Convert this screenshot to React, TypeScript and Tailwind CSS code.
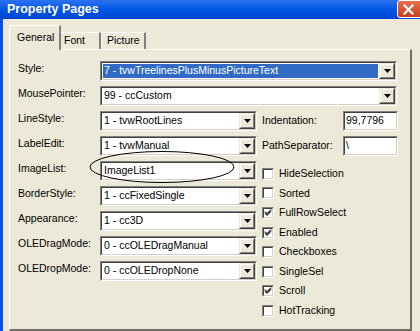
import type { ReactNode } from "react";

const Sunken = ({ className, children }: { className: string; children?: ReactNode }) => (
  <div className={"border border-t-[#808080] border-l-[#808080] border-b-white border-r-white " + className}>
    <div className="flex h-full items-center border border-t-[#404040] border-l-[#404040] border-b-[#d4d0c8] border-r-[#d4d0c8] bg-white">
      {children}
    </div>
  </div>
);

const DropButton = () => (
  <div className="h-[16px] w-[16px] shrink-0 border border-t-[#ece9d8] border-l-[#ece9d8] border-b-[#404040] border-r-[#404040]">
    <div className="flex h-full items-center justify-center border border-t-white border-l-white border-b-[#808080] border-r-[#808080] bg-[#ece9d8]">
      <svg width="7" height="4" viewBox="0 0 7 4">
        <polygon points="0,0 7,0 3.5,4" fill="#000" />
      </svg>
    </div>
  </div>
);

const Combo = ({ value, wide, selected }: { value: string; wide?: boolean; selected?: boolean }) => (
  <Sunken className={wide ? "h-[20px] w-[297px]" : "h-[20px] w-[157px]"}>
    <div className="h-full flex-1 p-[1px]">
      <div
        className={
          selected
            ? "flex h-full items-center bg-[#316ac5] pl-[1px] text-white"
            : "flex h-full items-center pl-[1px] text-black"
        }
      >
        {value}
      </div>
    </div>
    <DropButton />
  </Sunken>
);

const Row = ({ label, children }: { label: string; children: ReactNode }) => (
  <div className="flex h-[20px] items-start">
    <div className="w-[82px] leading-[14px]">{label}</div>
    {children}
  </div>
);

const Check = ({ label, checked }: { label: string; checked?: boolean }) => (
  <div className="flex h-[19.6px] items-center gap-[5px]">
    <div className="h-[12px] w-[12px] border border-t-[#808080] border-l-[#808080] border-b-white border-r-white">
      <div className="flex h-full items-center justify-center border border-t-[#404040] border-l-[#404040] border-b-[#d4d0c8] border-r-[#d4d0c8] bg-white">
        {checked && (
          <svg width="8" height="8" viewBox="0 0 8 8">
            <path d="M1 3.5 L3 5.5 L7 1.5 M1 4.5 L3 6.5 L7 2.5 M1 2.5 L3 4.5 L7 0.5" stroke="#000" strokeWidth="1" fill="none" />
          </svg>
        )}
      </div>
    </div>
    <span>{label}</span>
  </div>
);

export default function App() {
  const leftRows = [
    ["LineStyle:", "1 - tvwRootLines"],
    ["LabelEdit:", "1 - tvwManual"],
    ["ImageList:", "ImageList1"],
    ["BorderStyle:", "1 - ccFixedSingle"],
    ["Appearance:", "1 - cc3D"],
    ["OLEDragMode:", "0 - ccOLEDragManual"],
    ["OLEDropMode:", "0 - ccOLEDropNone"],
  ];
  const checks: [string, boolean][] = [
    ["HideSelection", false],
    ["Sorted", false],
    ["FullRowSelect", true],
    ["Enabled", true],
    ["Checkboxes", false],
    ["SingleSel", false],
    ["Scroll", true],
    ["HotTracking", false],
  ];

  return (
    <div className="relative h-[331px] w-[420px] overflow-hidden bg-[#ece9d8] font-['Liberation_Sans',Arial,sans-serif] text-[10.5px] text-black">
      {/* title bar */}
      <div className="flex h-[19px] items-center bg-gradient-to-b from-[#2a72f0] via-[#0055e5] to-[#0046d0] pl-[7px]">
        <span className="-mt-[1px] flex-1 text-[12.5px] font-bold text-white">Property Pages</span>
        <div className="mr-[-3px] flex h-[18px] w-[26px] items-center justify-center self-start rounded-[3px] border border-white bg-gradient-to-b from-[#e8704a] to-[#c83c18]">
          <svg width="11" height="11" viewBox="0 0 11 11" className="-ml-[3px]">
            <path d="M1.5 1.5 L9.5 9.5 M9.5 1.5 L1.5 9.5" stroke="#fff" strokeWidth="2.2" strokeLinecap="square" />
          </svg>
        </div>
      </div>

      <div className="flex h-[312px]">
        <div className="w-[3px] bg-[#0a4ff0]" />
        <div className="pl-[6px] pt-[6px]">
          {/* tabs */}
          <div className="relative z-10 flex h-[24px] items-end">
            <div className="-mb-px flex h-[25px] w-[52px] items-center border-l border-t border-r-2 border-l-white border-t-white border-r-[#808080] bg-[#ece9d8] pl-[7px]">
              General
            </div>
            <div className="flex h-[17px] w-[40px] items-center border-t border-r-2 border-t-white border-r-[#808080] pl-[3px]">
              Font
            </div>
            <div className="flex h-[17px] w-[45px] items-center border-l border-t border-r-2 border-l-white border-t-white border-r-[#808080] pl-[5px]">
              Picture
            </div>
          </div>

          {/* panel */}
          <div className="h-[282px] w-[403px] border-l border-t border-l-white border-t-white border-r-2 border-b-2 border-r-[#716f64] border-b-[#716f64] pl-[8px] pt-[11px]">
            <div className="flex flex-col gap-[5px]">
              <Row label="Style:">
                <Combo value="7 - tvwTreelinesPlusMinusPictureText" wide selected />
              </Row>
              <Row label="MousePointer:">
                <Combo value="99 - ccCustom" wide />
              </Row>
            </div>
            <div className="mt-[5px] flex gap-[5px]">
              <div className="flex flex-col gap-[5px]">
                {leftRows.map(([l, v]) => (
                  <Row key={l} label={l}>
                    <Combo value={v} />
                  </Row>
                ))}
              </div>
              <div className="flex flex-col">
                <div className="flex h-[20px] items-center">
                  <span className="w-[81px]">Indentation:</span>
                  <Sunken className="h-[20px] w-[55px]">
                    <span className="pl-[1px]">99,7796</span>
                  </Sunken>
                </div>
                <div className="mt-[5px] flex h-[20px] items-center">
                  <span className="w-[81px]">PathSeparator:</span>
                  <Sunken className="h-[20px] w-[55px]">
                    <span className="pl-[1px]">\</span>
                  </Sunken>
                </div>
                <div className="mt-[8px] flex flex-col">
                  {checks.map(([l, c]) => (
                    <Check key={l} label={l} checked={c} />
                  ))}
                </div>
              </div>
            </div>
          </div>
        </div>
      </div>

      {/* hand-drawn ellipse around ImageList */}
      <svg className="pointer-events-none absolute left-[88px] top-[149px]" width="150" height="36" viewBox="0 0 150 36">
        <ellipse cx="74" cy="18" rx="72" ry="15.5" stroke="#000" strokeWidth="1" fill="none" />
      </svg>
    </div>
  );
}
